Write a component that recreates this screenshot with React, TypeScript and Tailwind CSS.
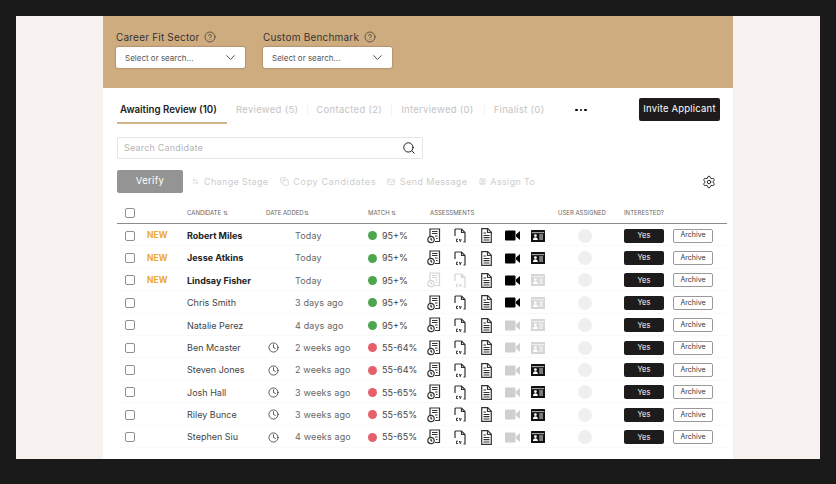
import React from "react";
import { ChevronDown, Search, Settings, Clock, CircleHelp, ArrowLeftRight, Copy, Mail, SquareUser } from "lucide-react";

const AssessIcon = ({ on }: { on: boolean }) => (
  <svg width="14" height="16" viewBox="0 0 14 16" fill="none" stroke={on ? "#333" : "#d4d4d4"} strokeWidth="1.2">
    <path d="M3 8V1h9.5v12.5H8" />
    <path d="M5 3.5h5.5M5 5.5h5.5M8 8h2.5M9 10.5h1.5" />
    <circle cx="4" cy="11.5" r="3.2" />
    <path d="M4 9.8v1.8l1.2.7" />
  </svg>
);
const CvIcon = ({ on }: { on: boolean }) => (
  <svg width="12" height="15" viewBox="0 0 12 15" fill="none" stroke={on ? "#333" : "#d4d4d4"} strokeWidth="1.2">
    <path d="M1 8V2a1 1 0 0 1 1-1h5.5L11 4.5V14H9.5" />
    <path d="M7.5 1v3.5H11" />
    <path d="M4 11.2H2.5v2.4H4M5.4 11l.9 2.7.9-2.7" strokeWidth="1" />
  </svg>
);
const DocIcon = () => (
  <svg width="11" height="15" viewBox="0 0 11 15" fill="none" stroke="#333" strokeWidth="1.2">
    <path d="M.7.7h6l3.6 3.6v10H.7z" />
    <path d="M6.5.7v3.8h3.8" />
    <path d="M2.5 5h2.5M2.5 7.5h6M2.5 9.7h6M2.5 12h6" />
  </svg>
);
const VideoIcon = ({ on }: { on: boolean }) => (
  <svg width="15" height="11" viewBox="0 0 15 11" fill={on ? "#000" : "#cfcfcf"}>
    <rect x="0" y="0.5" width="10.5" height="10" rx="1" />
    <path d="M11 4.5 15 1v9l-4-3.5z" />
  </svg>
);
const IdIcon = ({ on }: { on: boolean }) => (
  <svg width="14" height="12" viewBox="0 0 14 12">
    <rect x="0" y="0" width="14" height="12" rx="0.5" fill={on ? "#111" : "#d6d6d6"} />
    <rect x="0.8" y="2.4" width="12.4" height="0.7" fill="#fff" />
    <circle cx="4.4" cy="5.6" r="1.4" fill="#fff" />
    <path d="M2 10c0-2 1-2.8 2.4-2.8S6.8 8 6.8 10z" fill="#fff" />
    <path d="M8.2 5h3.8M8.2 7h3.8M8.2 9h3.8" stroke="#fff" strokeWidth="0.9" />
  </svg>
);

type Row = { name: string; isNew?: boolean; date: string; match: string; red?: boolean; a?: boolean; v: boolean; id: boolean; clock?: boolean };
const rows: Row[] = [
  { name: "Robert Miles", isNew: true, date: "Today", match: "95+%", a: true, v: true, id: true },
  { name: "Jesse Atkins", isNew: true, date: "Today", match: "95+%", a: true, v: true, id: true },
  { name: "Lindsay Fisher", isNew: true, date: "Today", match: "95+%", a: false, v: true, id: false },
  { name: "Chris Smith", date: "3 days ago", match: "95+%", a: true, v: true, id: false },
  { name: "Natalie Perez", date: "4 days ago", match: "95+%", a: true, v: false, id: false },
  { name: "Ben Mcaster", date: "2 weeks ago", match: "55-64%", red: true, a: true, v: false, id: false, clock: true },
  { name: "Steven Jones", date: "2 weeks ago", match: "55-64%", red: true, a: true, v: false, id: true, clock: true },
  { name: "Josh Hall", date: "3 weeks ago", match: "55-65%", red: true, a: true, v: false, id: true, clock: true },
  { name: "Riley Bunce", date: "3 weeks ago", match: "55-65%", red: true, a: true, v: false, id: true, clock: true },
  { name: "Stephen Siu", date: "4 weeks ago", match: "55-65%", red: true, a: true, v: false, id: true, clock: true },
];

const cols = "grid grid-cols-[30px_40px_79px_29px_73px_60px_26px_26px_26px_26px_26px_66px_49px_40px] items-center";
const Box = () => <span className="ml-2 block h-[10px] w-[10px] rounded-[2px] border border-[#8f8f8f] bg-white" />;
const IconCell = ({ children }: { children: React.ReactNode }) => <div className="flex w-[12px] justify-center overflow-visible [&>svg]:shrink-0">{children}</div>;

export default function App() {
  return (
    <div className="h-[484px] w-[836px] bg-[#1b1a1b] pt-4 pb-[25px] px-4 text-[#333]" style={{ fontFamily: "Inter, 'Liberation Sans', sans-serif" }}>
      <div className="h-full bg-[#f7f2ef] px-[87px]">
        <div className="flex h-full flex-col bg-white">
          <div className="flex h-[72px] gap-[18px] bg-[#cfac80] pl-[13px] pt-[13px]">
            {["Career Fit Sector", "Custom Benchmark"].map((label) => (
              <div key={label} className="w-[129px]">
                <div className="flex h-[16px] items-center gap-[5px] text-[10px] leading-none tracking-[0.2px] text-[#333]">
                  {label}
                  <CircleHelp size={12} strokeWidth={1.4} />
                </div>
                <div className="mt-[2px] flex h-[21px] items-center justify-between rounded-[2px] bg-white pl-[9px] pr-[7px] text-[8px] text-[#555] shadow-[0_0_2px_rgba(0,0,0,0.45)]">
                  Select or search...
                  <ChevronDown size={15} strokeWidth={1.4} className="text-[#333]" />
                </div>
              </div>
            ))}
          </div>

          <div className="mt-[10px] flex h-[26px] items-start px-[14px]">
            <div className="flex h-[26px] w-[110px] items-center border-b-2 border-[#cfb48e] pl-[3px] text-[9.7px] font-semibold text-[#222]">
              Awaiting Review (10)
            </div>
            <div className="flex h-[24px] items-center text-[9.5px] tracking-[0.3px] text-[#c4c4c4]">
              <span className="ml-[9px] border-r border-[#f5f5f5] pr-[9px]">Reviewed (5)</span>
              <span className="ml-[8px] border-r border-[#f5f5f5] pr-[9px]">Contacted (2)</span>
              <span className="ml-[9px] border-r border-[#f5f5f5] pr-[10px]">Interviewed (0)</span>
              <span className="ml-[9px]">Finalist (0)</span>
              <span className="ml-[31px] flex gap-[2px]">
                <i className="h-[2.5px] w-[2.5px] rounded-full bg-black" />
                <i className="h-[2.5px] w-[2.5px] rounded-full bg-black" />
                <i className="h-[2.5px] w-[2.5px] rounded-full bg-black" />
              </span>
            </div>
            <div className="ml-auto mr-[-1px] flex h-[23px] w-[81px] items-center justify-center rounded-[2px] bg-[#1d1b1c] text-[9.5px] tracking-[0.2px] text-white">Invite Applicant</div>
          </div>

          <div className="ml-[14px] mt-[13px] flex h-[22px] w-[306px] items-center justify-between rounded-[2px] border border-[#e4e4e4] pl-[6px] pr-[6px] text-[9px] tracking-[0.2px] text-[#b5b5b5]">
            Search Candidate
            <Search size={14} strokeWidth={1.6} className="text-[#111]" />
          </div>

          <div className="ml-[14px] mr-[17px] mt-[11px] flex h-[23px] items-center text-[9px] tracking-[0.35px] text-[#cdcdcd]">
            <div className="flex h-[23px] w-[66px] items-center justify-center rounded-[2px] bg-[#949494] text-[9.5px] text-white">Verify</div>
            <span className="ml-[9px] flex items-center gap-[5px]"><ArrowLeftRight size={7} strokeWidth={2} />Change Stage</span>
            <span className="ml-[12px] flex items-center gap-[4px] tracking-[0.65px]"><Copy size={9} strokeWidth={2} />Copy Candidates</span>
            <span className="ml-[11px] flex items-center gap-[5px]"><Mail size={8} strokeWidth={2} />Send Message</span>
            <span className="ml-[12px] flex items-center gap-[4px]"><SquareUser size={7} strokeWidth={2.4} />Assign To</span>
            <Settings size={14} strokeWidth={1.5} className="ml-auto text-[#111]" />
          </div>

          <div className={`${cols} ml-[14px] mt-[9px] h-[22px] w-[610px] border-b border-[#8c8c8c] text-[6px] text-[#666]`}>
            <Box />
            <span />
            <span>CANDIDATE ⇅</span>
            <span className="col-span-2">DATE ADDED⇅</span>
            <span>MATCH ⇅</span>
            <span className="col-span-5 pl-[2px]">ASSESSMENTS</span>
            <span className="whitespace-nowrap">USER ASSIGNED</span>
            <span className="col-span-2 whitespace-nowrap">INTERESTED?</span>
          </div>

          {rows.map((r) => (
            <div key={r.name} className={`${cols} ml-[14px] h-[22.4px] w-[610px] border-b border-[#f9f9f9] pt-[2px] text-[9px]`}>
              <Box />
              <span className="text-[8.5px] font-bold text-[#eda92f]">{r.isNew ? "NEW" : ""}</span>
              <span className={`whitespace-nowrap ${r.isNew ? "font-bold text-[#222]" : "text-[#444]"}`}>{r.name}</span>
              <span className="pl-[2px]">{r.clock && <Clock size={11} strokeWidth={1.6} className="text-[#222]" />}</span>
              <span className="tracking-[0.15px] text-[#666]">{r.date}</span>
              <span className="flex items-center gap-[5px] text-[#444]">
                <i className={`h-[9px] w-[9px] rounded-full ${r.red ? "bg-[#e5606a]" : "bg-[#4da64e]"}`} />
                {r.match}
              </span>
              <IconCell><AssessIcon on={!!r.a} /></IconCell>
              <IconCell><CvIcon on={!!r.a} /></IconCell>
              <IconCell><DocIcon /></IconCell>
              <IconCell><VideoIcon on={r.v} /></IconCell>
              <IconCell><IdIcon on={r.id} /></IconCell>
              <span className="ml-[20px] block h-[14px] w-[14px] rounded-full bg-[#efefef]" />
              <span className="flex h-[14px] w-[40px] items-center justify-center rounded-[2px] bg-[#1d1b1c] text-[7.5px] text-white">Yes</span>
              <span className="flex h-[14px] w-[40px] items-center justify-center rounded-[2px] border border-[#999] text-[7px] text-[#333]">Archive</span>
            </div>
          ))}
        </div>
      </div>
    </div>
  );
}
